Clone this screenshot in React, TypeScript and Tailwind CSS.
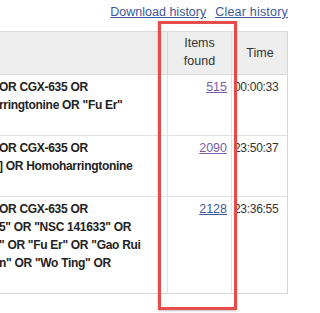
const rows = [
  {
    query: ['OR CGX-635 OR', 'rringtonine OR "Fu Er"', ''],
    items: '515',
    visited: true,
    time: '00:00:33',
  },
  {
    query: ['OR CGX-635 OR', '] OR Homoharringtonine', ''],
    items: '2090',
    visited: true,
    time: '23:50:37',
  },
  {
    query: ['OR CGX-635 OR', '5" OR "NSC 141633" OR', '" OR "Fu Er" OR "Gao Rui', 'n" OR "Wo Ting" OR', ''],
    items: '2128',
    visited: false,
    time: '23:36:55',
  },
];

const App = () => {
  return (
    <div
      className="relative w-[300px] h-[313px] overflow-hidden bg-white text-[12.5px] leading-[18px] text-[#333]"
      style={{ fontFamily: '"Liberation Sans", Arial, sans-serif' }}
    >
      <div className="flex justify-end gap-[9px] pr-[12px] pt-[3px] h-[31px]">
        <a href="#" className="text-[#3c5a9a] underline">Download history</a>
        <a href="#" className="text-[#3c5a9a] underline tracking-[0.2px]">Clear history</a>
      </div>

      <div className="w-[288px] border-r border-b border-[#d6d6d6]">
        <div className="grid grid-cols-[168px_64px_56px] bg-[#eeeeee] border-t border-b border-[#dcdcdc]">
          <div className="border-r border-[#d8d8d8]" />
          <div className="border-r border-[#e2e2e2] text-center pt-[2px] pb-[4px]">
            <div>Items</div>
            <div>found</div>
          </div>
          <div className="flex items-center justify-center">Time</div>
        </div>

        {rows.map((row, i) => (
          <div
            key={i}
            className={`grid grid-cols-[168px_64px_56px] ${i < rows.length - 1 ? 'border-b border-[#e2e2e2]' : ''}`}
          >
            <div className="border-r border-[#e2e2e2] py-[3px] text-[12px] tracking-[-0.3px] font-bold text-[#222] overflow-hidden">
              {row.query.map((line, j) => (
                <div key={j} className="whitespace-nowrap -ml-[1px]">
                  {line || '\u00a0'}
                </div>
              ))}
            </div>
            <div className="border-r border-[#e2e2e2] text-right pr-[4px] py-[3px]">
              <a href="#" className={`underline ${row.visited ? 'text-[#7b5ea7]' : 'text-[#3c5a9a]'}`}>
                {row.items}
              </a>
            </div>
            <div className="pl-[2px] py-[3px] text-[12px] tracking-[-0.3px]">{row.time}</div>
          </div>
        ))}
      </div>

      <div className="absolute left-[158px] top-[21px] w-[79px] h-[289px] border-[3px] border-[#e64c4c] shadow-[0_1px_2px_rgba(0,0,0,0.25)]" />
    </div>
  );
};

export default App;
